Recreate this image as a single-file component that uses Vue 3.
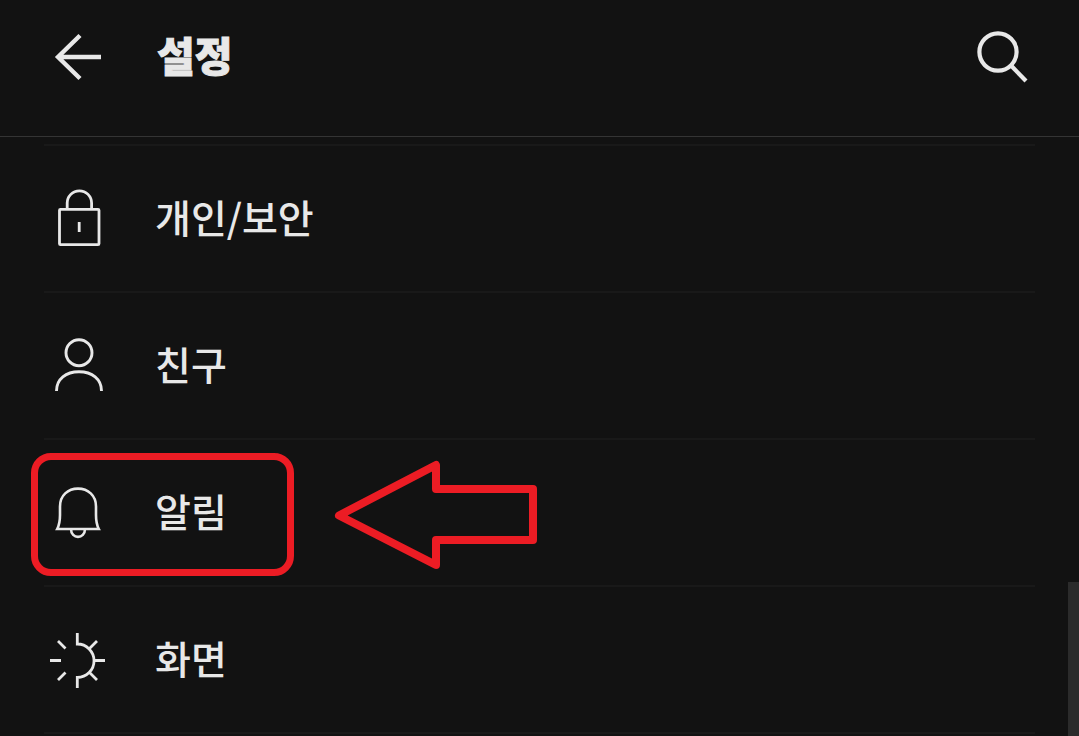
<script setup>
const items = [
  { id: 'privacy', label: '개인/보안' },
  { id: 'friends', label: '친구' },
  { id: 'alerts', label: '알림', marked: true },
  { id: 'display', label: '화면' },
]
</script>

<template>
  <div class="screen">
    <header class="bar">
      <button class="icon-btn" type="button" aria-label="뒤로">
        <svg class="icon" viewBox="0 0 68 66" stroke-width="4.4">
          <path d="M57 33H14M36 11.500L14 33L36 54.500" />
        </svg>
      </button>
      <h1 class="title">설정</h1>
      <button class="icon-btn" type="button" aria-label="검색">
        <svg class="icon" viewBox="0 0 68 66" stroke-width="4.200">
          <circle cx="31" cy="28" r="18.600" />
          <path d="M44 41.500L59 57" />
        </svg>
      </button>
    </header>

    <main class="body">
      <ul class="list">
        <li v-for="item in items" :key="item.id" class="item">
          <button class="row" type="button">
            <svg v-if="item.id === 'privacy'" class="icon" viewBox="0 0 68 66" stroke-width="2.800">
              <rect x="15.500" y="23.300" width="39.500" height="35.400" rx="1" />
              <path d="M23.200 23V17A12.200 12.200 0 0 1 47.600 17V23M35.200 36V46" />
            </svg>
            <svg v-else-if="item.id === 'friends'" class="icon" viewBox="0 0 68 66" stroke-width="2.900">
              <circle cx="35" cy="19.700" r="13" />
              <path d="M12.500 58C12.500 46 22 38.800 35 38.800S57.500 46 57.500 58" />
            </svg>
            <svg v-else-if="item.id === 'alerts'" class="icon" viewBox="0 0 68 66" stroke-width="2.600">
              <path d="M13.200 49C15.500 44.500 16 39.500 16 35V26.500C16 15.500 24 8.600 34 8.600S52 15.500 52 26.500V35C52 39.500 52.500 44.500 54.800 49Z" />
              <path d="M27 49C27 59.500 41 59.500 41 49" />
            </svg>
            <svg v-else class="icon" viewBox="0 0 68 66" stroke-width="2.800">
              <path d="M33.300 6V17A16.700 16.700 0 0 1 33.300 50.500V61" />
              <path d="M50 33.500H61M6 33.500H17M14 14L21.500 21.500M14 53L21.500 45.500M45.500 21.500L53 14M45.500 45.500L53 53" />
            </svg>
            <span class="label">{{ item.label }}</span>
          </button>
          <template v-if="item.marked">
            <span class="frame"></span>
            <svg class="pointer" viewBox="0 0 204 110">
              <path d="M5 55.500L102 5V29H199V80H102V105Z" />
            </svg>
          </template>
        </li>
      </ul>
      <div class="scroll-thumb"></div>
    </main>
  </div>
</template>

<style>
body {
  margin: 0;
  background: #121212;
}
</style>

<style scoped>
.screen {
  display: flex;
  flex-direction: column;
  min-height: 100vh;
  background: #121212;
  color: #e8e8e8;
  font-family: "Noto Sans CJK KR", sans-serif;
}
.bar {
  display: flex;
  align-items: center;
  gap: 45px;
  padding: 24px 44px 46px;
  border-bottom: 1px solid #343434;
}
.title {
  flex: 1;
  margin: 0;
  padding-bottom: 6px;
  font-size: 41px;
  line-height: 58px;
  font-weight: 900;
  -webkit-text-stroke: 1px currentColor;
}
.icon-btn,
.row {
  padding: 0;
  border: 0;
  background: none;
  color: inherit;
  font: inherit;
  text-align: left;
  cursor: pointer;
}
.icon {
  display: block;
  flex: none;
  width: 68px;
  height: 66px;
  fill: none;
  stroke: currentColor;
}
.body {
  position: relative;
  flex: 1;
  padding: 7px 44px 0;
}
.list {
  margin: 0;
  padding: 0;
  list-style: none;
  border-top: 2px solid #191919;
}
.item {
  position: relative;
  border-bottom: 2px solid #191919;
}
.row {
  display: flex;
  align-items: center;
  gap: 43px;
  width: 100%;
  padding: 40px 0 39px;
}
.label {
  padding-bottom: 6px;
  font-size: 39px;
  line-height: 58px;
  font-weight: 500;
}
.frame {
  position: absolute;
  top: 13px;
  left: -13px;
  box-sizing: border-box;
  width: 263px;
  height: 123px;
  border: 7px solid #ec1c24;
  border-radius: 20px;
  pointer-events: none;
}
.pointer {
  position: absolute;
  top: 20px;
  left: 290px;
  width: 204px;
  height: 110px;
  fill: none;
  stroke: #ec1c24;
  stroke-width: 8;
  stroke-linejoin: round;
  pointer-events: none;
}
.scroll-thumb {
  position: absolute;
  right: 0;
  bottom: 0;
  width: 11px;
  height: 154px;
  background: #2b2b2b;
}
</style>
